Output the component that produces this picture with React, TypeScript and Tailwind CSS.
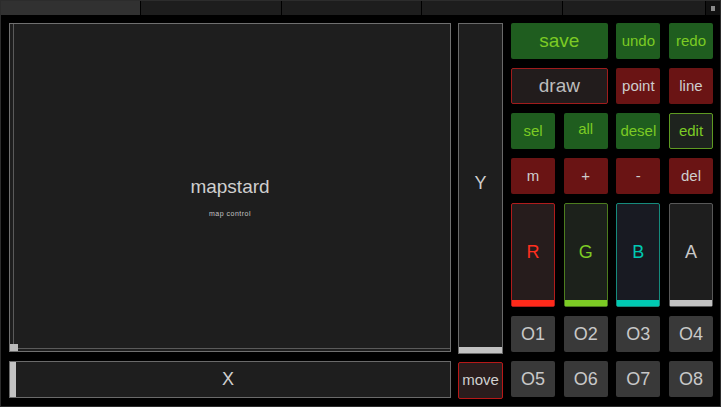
const font = "font-['Liberation_Sans',Arial,sans-serif]";

function Btn({
  label,
  className,
}: {
  label: string;
  className: string;
}) {
  return (
    <div className={`flex items-center justify-center rounded-[2px] ${className}`}>
      {label}
    </div>
  );
}

function ColorSlider({
  label,
  box,
  text,
  bar,
}: {
  label: string;
  box: string;
  text: string;
  bar: string;
}) {
  return (
    <div className={`flex flex-col rounded-[2px] border ${box}`}>
      <div className={`flex flex-1 items-center justify-center text-[18px] ${text}`}>{label}</div>
      <div className={`h-[6px] ${bar}`} />
    </div>
  );
}

export default function App() {
  const green = "bg-[#1f5d1f] text-[#7ccb24]";
  const red = "bg-[#6a1414] text-[#cdcdcd]";
  const gray = "bg-[#393939] text-[#c8c8c8] text-[18px]";

  return (
    <div className={`flex h-[407px] w-[721px] flex-col overflow-hidden border border-[#2c2c2c] bg-black ${font}`}>
      {/* tab strip */}
      <div className="flex h-[15px] shrink-0 gap-px border-b border-black bg-black">
        <div className="w-[139px] bg-[#313131]" />
        <div className="w-[140px] bg-[#1d1d1d]" />
        <div className="w-[139px] bg-[#1d1d1d]" />
        <div className="w-[140px] bg-[#1d1d1d]" />
        <div className="w-[142px] bg-[#1d1d1d]" />
        <div className="flex flex-1 items-center justify-center bg-[#111]">
          <div className="h-[5px] w-[4px] bg-[#8a8a8a]" />
        </div>
      </div>

      <div className="flex flex-1 pl-[8px] pt-[7px]">
        {/* xy pad + X slider */}
        <div className="flex w-[442px] flex-col">
          <div className="relative flex h-[329px] items-center justify-center border border-[#707070] bg-[#1e1e1e]">
            <div className="absolute bottom-[2px] left-[3px] top-0 w-px bg-[#5a5a5a]" />
            <div className="absolute bottom-[2px] left-0 right-0 h-px bg-[#5a5a5a]" />
            <div className="absolute bottom-0 left-0 h-[7px] w-[8px] bg-[#b9b9b9]" />
            <div className="relative">
              <span className="text-[19px] text-[#cfcfcf]">mapstard</span>
              <span className="absolute left-1/2 top-full mt-[7px] -translate-x-1/2 whitespace-nowrap text-[7px] tracking-[0.5px] text-[#c4c4c4]">
                map control
              </span>
            </div>
          </div>
          <div className="mt-[9px] flex h-[37px] border border-[#6a6a6a] bg-[#1e1e1e]">
            <div className="w-[6px] bg-[#c2c2c2]" />
            <div className="flex flex-1 items-center justify-center pr-[10px] text-[18px] text-[#cfcfcf]">X</div>
          </div>
        </div>

        {/* Y slider + move */}
        <div className="ml-[7px] flex w-[45px] flex-col gap-2">
          <div className="flex h-[331px] flex-col border border-[#6a6a6a] bg-[#1e1e1e]">
            <div className="flex flex-1 items-center justify-center pb-[4px] text-[18px] text-[#cfcfcf]">Y</div>
            <div className="h-[6px] bg-[#c2c2c2]" />
          </div>
          <Btn label="move" className="h-[37px] border border-[#b81818] bg-[#2a1d1d] text-[15px] text-[#d0d0d0]" />
        </div>

        {/* button grid */}
        <div className="ml-[8px] grid w-[202px] grid-cols-4 grid-rows-[36px_36px_36px_36px_104px_36px_36px] gap-x-[8.6px] gap-y-[9px]">
          <Btn label="save" className={`col-span-2 text-[19px] ${green}`} />
          <Btn label="undo" className={`text-[15px] ${green}`} />
          <Btn label="redo" className={`text-[15px] ${green}`} />

          <Btn label="draw" className="col-span-2 border border-[#a01c1c] bg-[#221c1c] text-[19px] text-[#bdbdbd]" />
          <Btn label="point" className={`text-[15px] ${red}`} />
          <Btn label="line" className={`text-[15px] ${red}`} />

          <Btn label="sel" className={`text-[15px] ${green}`} />
          <Btn label="all" className={`pb-[3px] text-[15px] ${green}`} />
          <Btn label="desel" className={`text-[15px] ${green}`} />
          <Btn label="edit" className="border border-[#5e9a22] bg-[#1e231e] text-[15px] text-[#7ccb24]" />

          <Btn label="m" className={`text-[15px] ${red}`} />
          <Btn label="+" className={`text-[15px] ${red}`} />
          <Btn label="-" className={`text-[15px] ${red}`} />
          <Btn label="del" className={`text-[15px] ${red}`} />

          <ColorSlider label="R" box="border-[#b01c1c] bg-[#261c1c]" text="text-[#ff2f1f]" bar="bg-[#ff2a1a]" />
          <ColorSlider label="G" box="border-[#4c7c1e] bg-[#1c211b]" text="text-[#7ccb24]" bar="bg-[#7ccb24]" />
          <ColorSlider label="B" box="border-[#168a7c] bg-[#181a22]" text="text-[#00c9b2]" bar="bg-[#00c9b2]" />
          <ColorSlider label="A" box="border-[#585858] bg-[#1e1e1e]" text="text-[#c8c8c8]" bar="bg-[#c2c2c2]" />

          {["O1", "O2", "O3", "O4", "O5", "O6", "O7", "O8"].map((o) => (
            <Btn key={o} label={o} className={gray} />
          ))}
        </div>
      </div>
    </div>
  );
}
